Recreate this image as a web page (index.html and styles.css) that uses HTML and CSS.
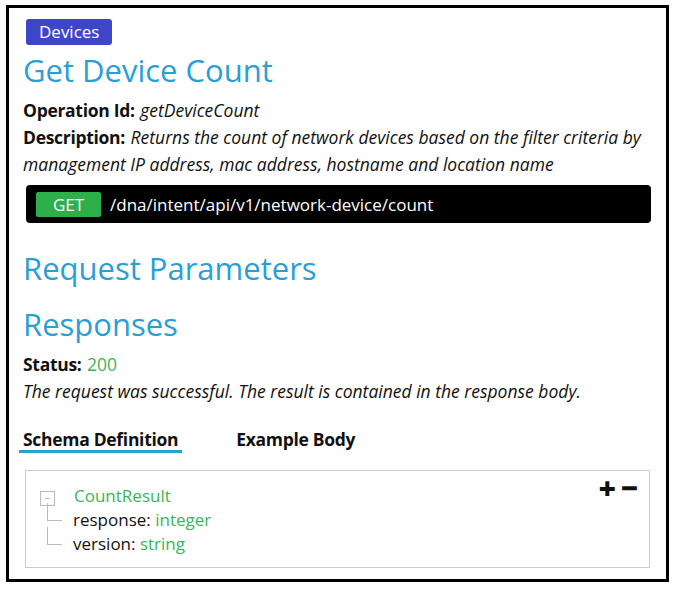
FILE: index.html
```html
<!DOCTYPE html>
<html>
<head>
    <meta charset="utf-8">
    <title>Get Device Count</title>
    <link rel="stylesheet" href="styles.css">
</head>
<body>
    <div class="frame">
        <span class="tag">Devices</span>
        <h1 class="title">Get Device Count</h1>

        <p class="field"><b>Operation Id:</b> <i>getDeviceCount</i></p>
        <p class="field desc"><b>Description:</b> <i>Returns the count of network devices based on the filter criteria by management IP address, mac address, hostname and location name</i></p>

        <div class="endpoint">
            <span class="verb">GET</span>
            <span class="path">/dna/intent/api/v1/network-device/count</span>
        </div>

        <h2 class="section req">Request Parameters</h2>
        <h2 class="section">Responses</h2>

        <p class="field"><b>Status:</b> <span class="ok">200</span></p>
        <p class="field"><i>The request was successful. The result is contained in the response body.</i></p>

        <div class="tabs">
            <span class="tab active">Schema Definition</span>
            <span class="tab">Example Body</span>
        </div>

        <div class="schema">
            <div class="zoom"><span>+</span><span>&minus;</span></div>
            <div class="tree">
                <div class="node root"><span class="toggle">&minus;</span><span class="type">CountResult</span></div>
                <div class="node leaf">response: <span class="type">integer</span></div>
                <div class="node leaf last">version: <span class="type">string</span></div>
            </div>
        </div>
    </div>
</body>
</html>
```

FILE: styles.css
```css
body {
	margin: 0;
	padding: 5px 5px 6px 6px;
	background: #fff;
	font-family: "Open Sans", "Noto Sans", sans-serif;
	color: #111;
}
.frame {
	border: 3px solid #000;
	height: 577px;
	box-sizing: border-box;
	width: 663px;
	padding: 11px 14px 0 14px;
}
.tag {
	display: inline-block;
	background: #3f45c9;
	color: #fff;
	font-size: 17px;
	line-height: 26px;
	padding: 0 13px;
	margin-left: 3px;
	border-radius: 3px;
}
.title, .section {
	font-weight: normal;
	color: #2a9fd6;
	font-size: 31px;
	margin: 0;
	line-height: 40px;
}
.title {
	margin-top: 5px;
	margin-bottom: 7px;
}
.field {
	margin: 0;
	font-size: 17.5px;
	line-height: 27px;
}
.field b {
	font-weight: 700;
	letter-spacing: -0.3px;
	margin-right: 1px;
}
.desc {
	width: 640px;
}
.endpoint {
	display: flex;
	align-items: center;
	background: #000;
	border-radius: 4px;
	height: 38px;
	margin: 7px 0 0 3px;
	width: 625px;
	padding-left: 10px;
	box-sizing: border-box;
}
.verb {
	background: #2db04b;
	color: #fff;
	font-size: 17px;
	line-height: 25px;
	width: 65px;
	text-align: center;
	border-radius: 2px;
}
.path {
	color: #fff;
	font-size: 17px;
	margin-left: 9px;
}
.req {
	margin-top: 25px;
	margin-bottom: 16px;
}
.section + .field {
	margin-top: 7px;
}
.ok {
	color: #3cb55a;
}
.tabs {
	display: flex;
	margin-top: 24px;
	margin-left: -4px;
}
.tab {
	font-size: 17.5px;
	font-weight: 700;
	letter-spacing: -0.3px;
	line-height: 20px;
	padding: 0 4px 1px 4px;
	margin-right: 50px;
}
.tab.active {
	border-bottom: 3px solid #2a9fd6;
}
.schema {
	position: relative;
	border: 1px solid #ccc;
	margin: 17px 0 0 2px;
	width: 625px;
	height: 98px;
	box-sizing: border-box;
	padding: 13px 0 0 14px;
}
.zoom {
	position: absolute;
	right: 11px;
	top: 1px;
	font-size: 30px;
	font-weight: 800;
	line-height: 32px;
	display: flex;
	gap: 5px;
}
.tree {
	font-size: 17px;
}
.node {
	line-height: 24px;
	position: relative;
}
.type {
	color: #3cb55a;
}
.toggle {
	display: inline-block;
	width: 13px;
	height: 13px;
	border: 1px solid #bbb;
	color: #aaa;
	font-size: 11px;
	line-height: 12px;
	text-align: center;
	margin-right: 19px;
	vertical-align: 0;
}
.leaf {
	padding-left: 33px;
}
.leaf:before {
	content: "";
	position: absolute;
	left: 7px;
	top: -5px;
	width: 14px;
	height: 17px;
	border-left: 1px solid #bbb;
	border-bottom: 1px solid #bbb;
}
```
